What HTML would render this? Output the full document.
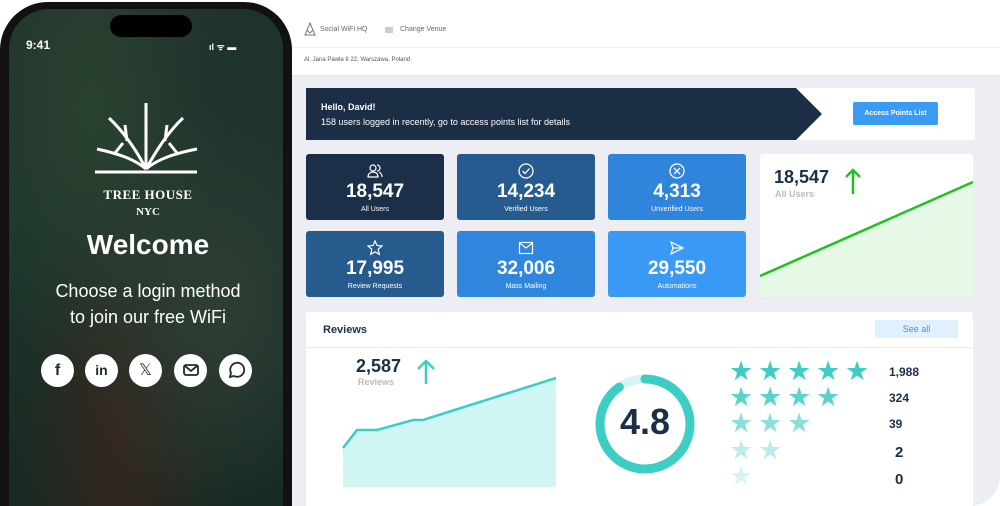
<!DOCTYPE html>
<html><head><meta charset="utf-8"><style>
*{margin:0;padding:0;box-sizing:border-box}
html,body{width:1000px;height:506px;overflow:hidden}
body{background:#fff;font-family:"Liberation Sans",sans-serif}
#wrap{position:relative;width:1000px;height:506px;overflow:hidden}
.abs{position:absolute}
.dash{left:292px;top:0;width:708px;height:506px;background:#eceef3;border-bottom-right-radius:30px;overflow:hidden}
.top{left:0;top:0;width:708px;height:76px;background:#fff;border-bottom:1px solid #e4e6ea}
.tile{position:absolute;width:138px;height:66px;border-radius:3px;color:#fff;text-align:center}
.tile .n{position:absolute;top:27px;width:100%;font-size:19px;font-weight:bold}
.tile .l{position:absolute;top:52px;width:100%;font-size:7px}
.tile svg{position:absolute;left:61px;top:9px}
.phone{left:0;top:2px;width:292px;height:504px;background:#111;border-radius:48px 48px 0 0}
.screen{left:9px;top:9px;width:274px;height:497px;border-radius:40px 40px 0 0;overflow:hidden;
background:radial-gradient(ellipse at 30% 20%,#2a4230 0%,transparent 50%),radial-gradient(ellipse at 75% 60%,#2f3e34 0%,transparent 50%),radial-gradient(ellipse at 40% 85%,#35261f 0%,transparent 45%),linear-gradient(#1f332d,#1c342b 50%,#172a22)}
.ic{position:absolute;top:345px;width:33px;height:33px;border-radius:50%;background:#fff;color:#1a2e26;font-weight:bold;text-align:center;line-height:33px;font-size:16px}
.star{position:absolute;font-size:27px;color:#3ccdc4;line-height:1}
.cnt{position:absolute;font-size:13px;color:#1b2f48;font-weight:bold}
</style></head><body><div id="wrap">
<div class="abs dash">
 <div class="abs top">
  <svg class="abs" style="left:12px;top:22px" width="12" height="14" viewBox="0 0 12 14"><path d="M1 13 L6 1 L11 13 Z M3 8 L6 11 L9 8" fill="none" stroke="#777" stroke-width="1"/></svg>
  <div class="abs" style="left:28px;top:26px;font-size:7px;color:#666">Social WiFi HQ</div>
  <div class="abs" style="left:93px;top:27px;width:8px;height:6px;background:#ccc"></div>
  <div class="abs" style="left:108px;top:26px;font-size:7px;color:#666">Change Venue</div>
  <div class="abs" style="left:0;top:47px;width:708px;height:1px;background:#eef0f3"></div>
  <div class="abs" style="left:12px;top:57px;font-size:6px;color:#555">Al. Jana Pawła II 22, Warszawa, Poland</div>
 </div>
 <div class="abs" style="left:14px;top:88px;width:669px;height:52px;background:#fff;border-radius:3px"></div>
 <svg class="abs" style="left:14px;top:88px" width="520" height="52"><path d="M0 0H490L516 26L490 52H0Z" fill="#1c2e45"/></svg>
 <div class="abs" style="left:29px;top:102px;font-size:9px;font-weight:bold;color:#fff">Hello, David!</div>
 <div class="abs" style="left:29px;top:117px;font-size:9px;color:#fff">158 users logged in recently, go to access points list for details</div>
 <div class="abs" style="left:561px;top:102px;width:85px;height:23px;background:#3a9bf2;border-radius:2px;color:#fff;font-size:7px;font-weight:bold;text-align:center;line-height:23px">Access Points List</div>

 <div class="tile" style="left:14px;top:154px;background:#1b2f48"><svg width="16" height="16" viewBox="0 0 16 16" fill="none" stroke="#fff" stroke-width="1.2"><circle cx="6" cy="5" r="3"/><path d="M1 14c0-3 2-5 5-5s5 2 5 5zM10 2a3 3 0 010 6M12 9c2 1 3 3 3 5"/></svg><div class="n">18,547</div><div class="l">All Users</div></div>
 <div class="tile" style="left:165px;top:154px;background:#265b8f"><svg width="16" height="16" viewBox="0 0 16 16" fill="none" stroke="#fff" stroke-width="1.3"><circle cx="8" cy="8" r="7"/><path d="M4.5 8l2.5 2.5 4.5-5"/></svg><div class="n">14,234</div><div class="l">Verified Users</div></div>
 <div class="tile" style="left:316px;top:154px;background:#2f85dc"><svg width="16" height="16" viewBox="0 0 16 16" fill="none" stroke="#fff" stroke-width="1.3"><circle cx="8" cy="8" r="7"/><path d="M5 5l6 6M11 5l-6 6"/></svg><div class="n">4,313</div><div class="l">Unverified Users</div></div>
 <div class="tile" style="left:14px;top:231px;background:#275b8d"><svg width="16" height="16" viewBox="0 0 16 16" fill="none" stroke="#fff" stroke-width="1.2"><path d="M8 1l2 4.5 5 .5-3.8 3.3 1.1 5L8 11.8 3.7 14.3l1.1-5L1 6l5-.5z"/></svg><div class="n">17,995</div><div class="l">Review Requests</div></div>
 <div class="tile" style="left:165px;top:231px;background:#2f86dc"><svg width="16" height="16" viewBox="0 0 16 16" fill="none" stroke="#fff" stroke-width="1.2"><rect x="1.5" y="2.5" width="13" height="11"/><path d="M1.5 3l6.5 5 6.5-5"/></svg><div class="n">32,006</div><div class="l">Mass Mailing</div></div>
 <div class="tile" style="left:316px;top:231px;background:#3a99f4"><svg width="16" height="16" viewBox="0 0 16 16" fill="none" stroke="#fff" stroke-width="1.2"><path d="M2 2l12 6-12 6 2-6zM4 8h10"/></svg><div class="n">29,550</div><div class="l">Automations</div></div>

 <div class="abs" style="left:468px;top:154px;width:213px;height:143px;background:#fff;border-radius:3px;overflow:hidden">
  <svg class="abs" style="left:0;top:0" width="213" height="143"><path d="M0 122L213 28V143H0Z" fill="#e6f9e6"/><path d="M0 122L213 28" stroke="#1fc21f" stroke-width="2.5"/><path d="M93 40V16M86 23l7-7 7 7" stroke="#1fc21f" stroke-width="2.5" fill="none"/></svg>
  <div class="abs" style="left:14px;top:13px;font-size:18px;font-weight:bold;color:#1b2f48">18,547</div>
  <div class="abs" style="left:15px;top:35px;font-size:9px;color:#bbb;font-weight:bold">All Users</div>
 </div>

 <div class="abs" style="left:14px;top:312px;width:667px;height:194px;background:#fff;border-radius:3px 3px 0 0">
  <div class="abs" style="left:17px;top:12px;font-size:11px;font-weight:bold;color:#1b2f48">Reviews</div>
  <div class="abs" style="left:569px;top:8px;width:83px;height:18px;background:#e0f0fd;color:#4a90d8;font-size:9px;text-align:center;line-height:18px">See all</div>
  <div class="abs" style="left:0;top:35px;width:667px;height:1px;background:#eceef1"></div>
  <svg class="abs" style="left:0;top:0" width="667" height="194">
   <path d="M37 136L51 118L71 118L107 108L117 108L250 66V175H37Z" fill="#cff6f2"/>
   <path d="M37 136L51 118L71 118L107 108L117 108L250 66" stroke="#3ccdc4" stroke-width="2.5" fill="none"/>
   <path d="M120 72V49M112 57l8-8 8 8" stroke="#3ccdc4" stroke-width="2.5" fill="none"/>
   <circle cx="339" cy="112" r="45" fill="none" stroke="#d5f5f2" stroke-width="9"/>
   <circle cx="339" cy="112" r="45" fill="none" stroke="#3ccdc4" stroke-width="9" stroke-dasharray="255 300" transform="rotate(-90 339 112)" stroke-linecap="round"/>
  </svg>
  <div class="abs" style="left:50px;top:44px;font-size:18px;font-weight:bold;color:#1b2f48">2,587</div>
  <div class="abs" style="left:52px;top:65px;font-size:9px;color:#bbb;font-weight:bold">Reviews</div>
  <div class="abs" style="left:299px;top:89px;width:80px;text-align:center;font-size:36px;font-weight:bold;color:#1b2f48">4.8</div>
 </div>
</div>
 <div class="star" style="left:729px;top:358px">★</div><div class="star" style="left:758px;top:358px">★</div><div class="star" style="left:787px;top:358px">★</div><div class="star" style="left:816px;top:358px">★</div><div class="star" style="left:845px;top:358px">★</div>
 <div class="star" style="left:729px;top:384px;opacity:.85">★</div><div class="star" style="left:758px;top:384px;opacity:.85">★</div><div class="star" style="left:787px;top:384px;opacity:.85">★</div><div class="star" style="left:816px;top:384px;opacity:.85">★</div>
 <div class="star" style="left:729px;top:410px;opacity:.6">★</div><div class="star" style="left:758px;top:410px;opacity:.6">★</div><div class="star" style="left:787px;top:410px;opacity:.6">★</div>
 <div class="star" style="left:729px;top:437px;opacity:.35">★</div><div class="star" style="left:758px;top:437px;opacity:.35">★</div>
 <div class="star" style="left:729px;top:463px;opacity:.2">★</div>
 <div class="cnt" style="left:889px;top:365px;font-size:12px">1,988</div>
 <div class="cnt" style="left:889px;top:391px;font-size:12px">324</div>
 <div class="cnt" style="left:889px;top:417px;font-size:12px">39</div>
 <div class="cnt" style="left:895px;top:444px;font-size:15px">2</div>
 <div class="cnt" style="left:895px;top:471px;font-size:15px">0</div>

<div class="abs phone"></div>
<div class="abs screen">
 <div class="abs" style="left:101px;top:6px;width:82px;height:22px;background:#000;border-radius:11px"></div>
 <div class="abs" style="left:17px;top:29px;color:#fff;font-size:12px;font-weight:bold">9:41</div>
 <div class="abs" style="left:200px;top:31px;color:#fff;font-size:9px;font-weight:bold">ıl ᯤ ▬</div>
 <svg class="abs" style="left:84px;top:94px" width="108" height="72" viewBox="0 0 108 72" fill="none" stroke="#fff" stroke-width="3">
  <path d="M2 69H104M53 0V66M53 66C45 50 32 30 16 15M53 66C62 50 74 30 90 15M53 66C40 55 22 50 4 46M53 66C66 55 84 50 104 46M34 38L32 22M72 38L74 22M22 50L30 40M84 50L76 40"/>
 </svg>
 <div class="abs" style="left:0;top:178px;width:278px;text-align:center;color:#fff;font-family:'Liberation Serif',serif;font-weight:bold;font-size:13px;letter-spacing:.5px">TREE HOUSE</div>
 <div class="abs" style="left:0;top:197px;width:278px;text-align:center;color:#fff;font-family:'Liberation Serif',serif;font-weight:bold;font-size:11px">NYC</div>
 <div class="abs" style="left:0;top:220px;width:278px;text-align:center;color:#fff;font-weight:bold;font-size:28px">Welcome</div>
 <div class="abs" style="left:0;top:269px;width:278px;text-align:center;color:#fff;font-size:18px;line-height:26px">Choose a login method<br>to join our free WiFi</div>
 <div class="ic" style="left:32px">f</div>
 <div class="ic" style="left:76px;font-size:14px">in</div>
 <div class="ic" style="left:120px;font-weight:normal">𝕏</div>
 <div class="ic" style="left:165px"><svg width="16" height="12" viewBox="0 0 16 12" style="margin-top:10px" fill="none" stroke="#1a2e26" stroke-width="1.8"><rect x="1" y="1" width="14" height="10" rx="2"/><path d="M2 2l6 5 6-5"/></svg></div>
 <div class="ic" style="left:210px"><svg width="18" height="18" viewBox="0 0 18 18" style="margin-top:7px" fill="none" stroke="#1a2e26" stroke-width="1.8"><path d="M3 16l1-4a7 7 0 113 3z"/></svg></div>
</div>
</div></body></html>
